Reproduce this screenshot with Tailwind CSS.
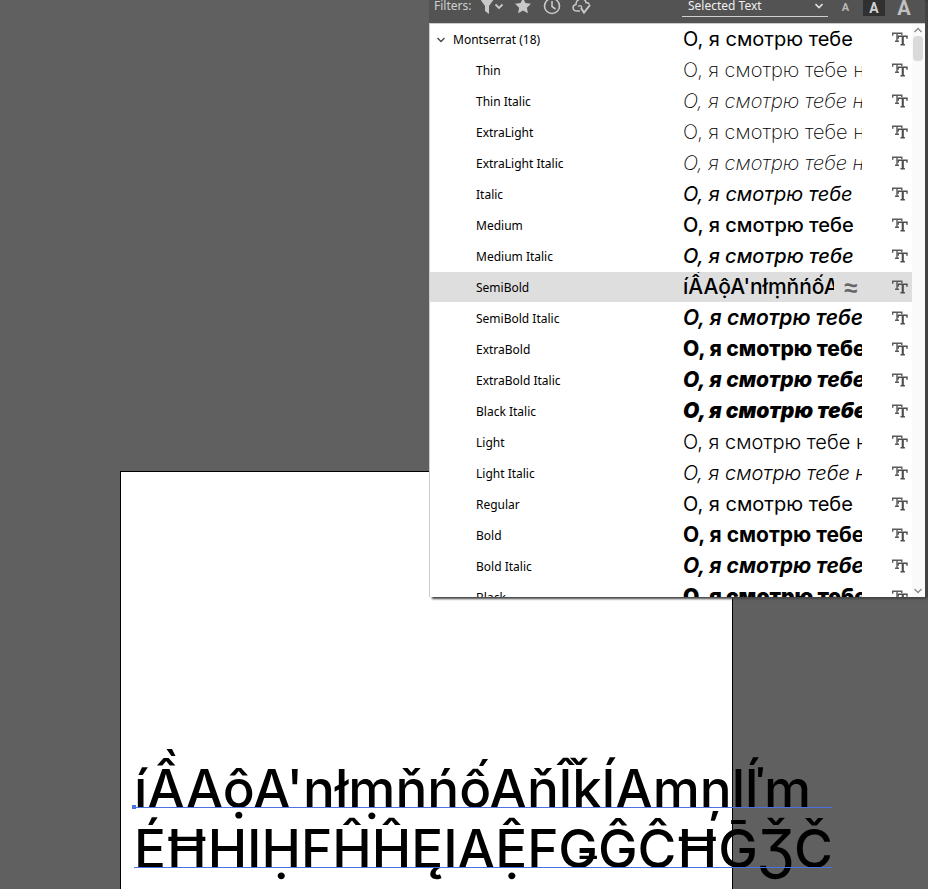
<!DOCTYPE html>
<html lang="en">
<head>
  <meta charset="UTF-8" />
  <meta name="viewport" content="width=device-width, initial-scale=1.0"/>
  <title>Font Picker</title>
  <script src="https://cdn.jsdelivr.net/npm/@tailwindcss/browser@4"></script>
</head>

<body class="relative h-screen overflow-hidden bg-[#606060] font-['Noto_Sans',sans-serif] text-black">

<!-- glyphs shared by the list rows -->
<svg class="hidden">
  <symbol id="tt" viewBox="0 0 16 14">
    <path d="M.7 3.800V1.200h9.100v2M5 1.200v8M3 9.300h4" fill="none" stroke="#5a5a5a" stroke-width="1.400"/>
    <path d="M6.200 6.800V4.200h8.800v2.600M10.700 4.200v8.300M8.500 12.800h4.400" fill="none" stroke="#4d4d4d" stroke-width="1.400"/>
    <path d="M10.700 4.200v8.300" stroke="#4d4d4d" stroke-width="2"/>
  </symbol>
</svg>

<main class="absolute inset-0">
  <!-- artboard -->
  <div class="absolute left-[120px] top-[471px] bottom-0 w-[613px] border border-b-0 border-black bg-white"></div>

  <!-- text object -->
  <div class="absolute left-[134px] top-[748px] whitespace-nowrap font-['Inter',sans-serif] text-[53px] leading-[82px] font-medium">
    <p class="relative h-[60px] w-[698px]">íẦAộA'nłṃňńốAňl̂ǩĺAmņlľ́m<span class="absolute inset-x-0 bottom-0 h-px bg-[#4a72e0]"></span></p>
    <p class="relative h-[60px] w-[698px]">ÉĦHIḤFĤĤĘIAỆFǤĜĈĦḠǮČ<span class="absolute inset-x-0 bottom-0 h-px bg-[#4a72e0]"></span></p>
    <span class="absolute -left-[2px] top-[57px] size-1 bg-[#4a72e0]"></span>
  </div>
</main>

<div class="absolute right-0 top-0 h-[597px] w-[3px] bg-[#3c3c3c]"></div>

<!-- font menu -->
<section class="absolute right-[3px] top-0 flex h-[597px] w-[496px] flex-col bg-white shadow-[3px_2px_2px_#444]">
  <header class="flex h-[23px] shrink-0 items-start bg-[#535353] pl-[5px] text-xs leading-[12px] text-[#d0d0d0]">
    <span class="w-[46px]">Filters:</span>
    <button type="button" aria-label="Filter by classification" class="w-[35px]">
      <svg class="h-[15px] w-6" viewBox="0 0 24 15" fill="none"><path d="M0-1h14L9 6v8l-4-3V6z" fill="#c8c8c8"/><path d="M15.500 4.500l3.500 3.500 3.500-3.500" stroke="#c8c8c8" stroke-width="1.800"/></svg>
    </button>
    <button type="button" aria-label="Favorites" class="w-[28px]">
      <svg class="h-[15px] w-4" viewBox="0 0 16 15"><path d="M8-2l2.400 5.100 5.600.7-4.100 3.900 1 5.600L8 10.600l-4.900 2.700 1-5.600L0 3.800l5.600-.7z" fill="#c8c8c8"/></svg>
    </button>
    <button type="button" aria-label="Recent" class="w-[29px]">
      <svg class="h-[15px] w-[18px]" viewBox="0 0 18 15" fill="none" stroke="#c8c8c8" stroke-width="1.600"><circle cx="9" cy="6" r="7.500"/><path d="M9 1v5.500l3.500 2.500"/></svg>
    </button>
    <button type="button" aria-label="Activated fonts" class="w-[20px]">
      <svg class="h-[15px] w-5" viewBox="0 0 20 15" fill="none" stroke="#c8c8c8"><path d="M8 11H5C0 11 0 5 4 4.500 4-2 13-3 14 2.500c2 0 3 1 3.500 2" stroke-width="1.500"/><path d="M6 6.500c3-2 4 0 3.500 2" stroke-width="1.400"/><path d="M9 8l3 4.500L18 5" stroke-width="2"/></svg>
    </button>
    <span class="relative ml-auto mr-[10px] h-[17px] w-[146px] border-b border-[#d0d0d0]">
      <select aria-label="Sample text" class="block h-3 w-full appearance-none bg-transparent pl-[6px] text-xs leading-[12px] text-[#f0f0f0] outline-none">
        <option>Selected Text</option>
      </select>
      <svg class="pointer-events-none absolute right-[5px] top-[3px] h-[6px] w-2" viewBox="0 0 8 6" fill="none" stroke="#e0e0e0" stroke-width="1.600"><path d="M.5 1L4 4.500 7.500 1"/></svg>
    </span>
    <button type="button" aria-label="Small sample" class="h-[15px] w-[15px] font-['Roboto',sans-serif] text-[11px] font-bold leading-[14px] text-[#b8b8b8]">A</button>
    <button type="button" aria-label="Medium sample" class="ml-[10px] h-[16px] w-[22px] bg-[#303030] font-['Roboto',sans-serif] text-sm font-bold leading-[12px]">A</button>
    <button type="button" aria-label="Large sample" class="ml-[8px] mr-[10px] h-[15px] w-[22px] font-['Roboto',sans-serif] text-[20px] font-bold leading-[12px] text-[#c0c0c0]">A</button>
  </header>

  <div class="flex min-h-0 flex-1 border-l border-t border-[#ccc]">
    <ul id="fonts" class="min-w-0 flex-1 overflow-hidden text-xs"></ul>
    <div class="flex w-[13px] flex-col items-center bg-[#fafafa] py-[3px] pr-[2px]">
      <svg class="h-[6px] w-2" viewBox="0 0 8 6" fill="none" stroke="#888" stroke-width="1.300"><path d="M.5 5L4 1.500 7.500 5"/></svg>
      <div class="mt-[3px] h-[25px] w-[10px] rounded-sm bg-[#dadada]"></div>
      <svg class="mt-auto h-[6px] w-2" viewBox="0 0 8 6" fill="none" stroke="#888" stroke-width="1.300"><path d="M.5 1L4 4.500 7.500 1"/></svg>
    </div>
  </div>
</section>

<script>
  const short = 'О, я смотрю тебе';
  const long = 'О, я смотрю тебе н';
  const fonts = [
    ['Montserrat (18)', 'text-[20px] font-normal', short],
    ['Thin', 'text-[20px] font-extralight', long],
    ['Thin Italic', 'text-[20px] font-extralight italic', long],
    ['ExtraLight', 'text-[20px] font-extralight', long],
    ['ExtraLight Italic', 'text-[20px] font-extralight italic', long],
    ['Italic', 'text-[20px] font-normal italic', short],
    ['Medium', 'text-[20px] font-medium', short],
    ['Medium Italic', 'text-[20px] font-medium italic', short],
    ['SemiBold', 'text-[21px] font-medium', "íẦAộA'nłṃňńốA"],
    ['SemiBold Italic', 'text-[21px] font-semibold italic', short],
    ['ExtraBold', 'text-[21px] font-extrabold', short],
    ['ExtraBold Italic', 'text-[21px] font-extrabold italic', short],
    ['Black Italic', 'text-[21px] font-black italic', short],
    ['Light', 'text-[20px] font-light', long],
    ['Light Italic', 'text-[20px] font-light italic', long],
    ['Regular', 'text-[20px] font-normal', short],
    ['Bold', 'text-[21px] font-bold', short],
    ['Bold Italic', 'text-[21px] font-bold italic', short],
    ['Black', 'text-[21px] font-black', short],
  ];

  document.getElementById('fonts').innerHTML = fonts.map(([name, style, sample], i) => {
    const selected = name === 'SemiBold';
    const arrow = '<svg class="mr-[8px] h-[6px] w-2 shrink-0" viewBox="0 0 8 6" fill="none" stroke="#444" stroke-width="1.3"><path d="M.5 1L4 4.500 7.500 1"/></svg>';
    return `
      <li class="mb-px flex h-[30px] items-center ${selected ? 'bg-[#dedede]' : ''}">
        <div class="flex w-[253px] shrink-0 items-center pt-[2px] ${i ? 'pl-[46px]' : 'pl-[7px]'}">${i ? '' : arrow}${name}</div>
        <div class="h-[30px] overflow-hidden whitespace-nowrap font-['Inter',sans-serif] leading-[30px] ${style} ${selected ? 'w-[151px]' : 'w-[179px]'}">${sample}</div>
        ${selected ? '<span class="w-7 pl-[10px] font-[\'Liberation_Sans\',sans-serif] text-2xl font-bold text-[#666]">≈</span>' : ''}
        <svg class="ml-auto mr-[4px] h-[14px] w-4 shrink-0"><use href="#tt"/></svg>
      </li>`;
  }).join('');
</script>

</body>
</html>
